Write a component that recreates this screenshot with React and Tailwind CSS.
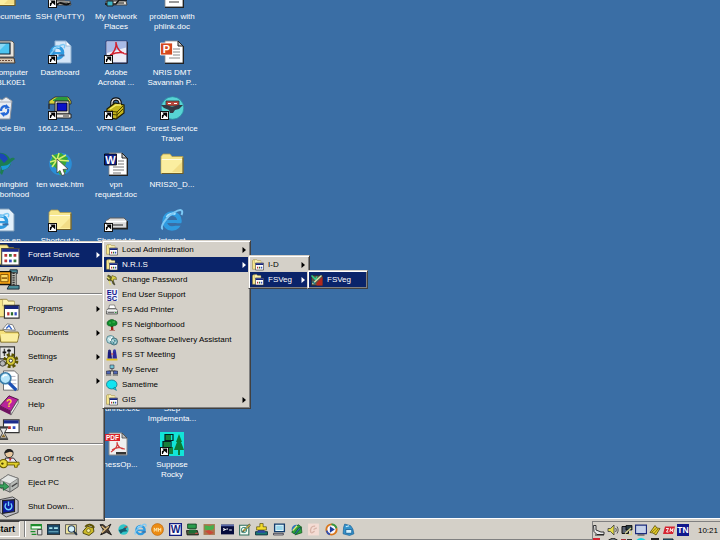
import React from 'react';
import clsx from 'clsx';

/* ---------- Shared icon parts ---------- */

function Icon({ children, className, box = 24 }) {
  return (
    <svg viewBox={`0 0 ${box} ${box}`} className={clsx('shrink-0', className)} aria-hidden="true">
      {children}
    </svg>
  );
}

function ShortcutArrow() {
  return (
    <g>
      <rect x="0.5" y="15.5" width="8" height="8" fill="#fff" stroke="#111" />
      <path d="M2.5 22v-2.5l3-2M3.6 17h3v3z" stroke="#000" strokeWidth="1.2" fill="#000" fillOpacity="0.9" />
    </g>
  );
}

function FolderShape() {
  return (
    <g>
      <path d="M1 4.500l2-2.500h7l2 2.500h11v17H1z" fill="#f6e68c" stroke="#b09a4c" strokeWidth="0.8" />
      <path d="M1.500 7h21v14h-21z" fill="#fbeea0" />
      <path d="M2 7.500h20" stroke="#fffbe0" />
      <path d="M23 5.500v16H2" stroke="#6b5c2a" strokeWidth="1.200" fill="none" />
      <path d="M12 20h10V10z" fill="#eed67a" opacity="0.7" />
    </g>
  );
}

function PageShape() {
  return (
    <g>
      <path d="M5 1h13l5 5v17H5z" fill="#fff" stroke="#8a8a8a" strokeWidth="0.8" />
      <path d="M18 1v5h5z" fill="#c8c8c8" stroke="#222" strokeWidth="1" />
      <path d="M23.400 6v17.400H5" stroke="#222" strokeWidth="1.200" fill="none" />
    </g>
  );
}

function ExplorerShape() {
  return (
    <g fill="none">
      <circle cx="12" cy="13" r="7.500" stroke="#2f9be0" strokeWidth="4.500" />
      <path d="M7 13.500h12" stroke="#2f9be0" strokeWidth="3" />
      <path d="M14 16.500h8" stroke="#3a6ea5" strokeWidth="2.500" />
      <path d="M6.500 9c2-3 6-4 9-3" stroke="#a8e0ff" strokeWidth="2" />
      <path d="M3 21C-1 20 6 9 14 4.500 20 1 24 1 21.500 7" stroke="#7cc8f4" strokeWidth="2" />
    </g>
  );
}

function ProgramFolderShape() {
  return (
    <g>
      <path d="M1 3.500L2.500 1.500h7L11 3.500h6v17H1z" fill="#f6e68c" stroke="#8b7a3a" strokeWidth="1" />
      <path d="M5 1.500h5l1 2h7v5H5z" fill="#fdf3b4" stroke="#9b8a4a" strokeWidth="0.600" />
      <path d="M7 8h16v14H7z" fill="#fff" stroke="#333" strokeWidth="1.200" />
      <path d="M7.500 8.500h15V12h-15z" fill="#16257c" />
      <path d="M10 15.500h2.500V19H10z" fill="#b33" />
      <path d="M14 15.500h2.500V19H14z" fill="#27682b" />
      <path d="M18 15.500h2.500V19H18z" fill="#334cc0" />
    </g>
  );
}

function MonitorShape({ screen = '#35a8e0' }) {
  return (
    <g>
      <path d="M3 2h17l2 2v11H3z" fill="#d8d4cc" stroke="#555" strokeWidth="1" />
      <path d="M5.500 4h12v8.500h-12z" fill={screen} stroke="#222" strokeWidth="0.800" />
      <path d="M7 5l8 0-7 6z" fill="#fff" opacity="0.25" />
      <path d="M7 15h10v2H7z" fill="#777" />
      <path d="M2 17h20l1 4H2z" fill="#e4e0d8" stroke="#444" strokeWidth="1" />
      <path d="M12 19h8" stroke="#333" strokeWidth="1.200" />
    </g>
  );
}

function KeyShape() {
  return (
    <g>
      <circle cx="6" cy="17" r="4.500" fill="#e9d93c" stroke="#6b5d00" strokeWidth="1.200" />
      <circle cx="4.800" cy="17" r="1.300" fill="#4e4400" />
      <path d="M10 15.500h13v3h-2V21h-3v-2.500h-8z" fill="#e0cf2a" stroke="#6b5d00" strokeWidth="1" />
    </g>
  );
}

const icons = {
  folder: <FolderShape />,
  folderLink: <><FolderShape /><ShortcutArrow /></>,
  putty: (
    <>
      <MonitorShape screen="#222" />
      <path d="M9 21c3-6 8 3 13-2" stroke="#111" strokeWidth="2" fill="none" />
      <ShortcutArrow />
    </>
  ),
  network: (
    <>
      <MonitorShape />
      <path d="M1 20h11l3-4h8" stroke="#111" strokeWidth="1.500" fill="none" />
      <path d="M3 17h6v5H3z" fill="#3cb4c8" stroke="#222" strokeWidth="1" />
    </>
  ),
  page: <><PageShape /><path d="M9 18h10" stroke="#999" strokeWidth="2" /></>,
  computer: (
    <>
      <path d="M2 1h18l2 2v14H2z" fill="#e8e4dc" stroke="#555" strokeWidth="1" />
      <path d="M4 3h14v11H4z" fill="#4cc4f0" stroke="#123" strokeWidth="1.200" />
      <path d="M5 4h9l-8 8z" fill="#fff" opacity="0.35" />
      <path d="M3 18h19l1 5H2z" fill="#d8c8b4" stroke="#4a3a2a" />
      <path d="M4 20.500h16" stroke="#6a4a3a" strokeWidth="1.200" strokeDasharray="2 1" />
    </>
  ),
  dashboard: (
    <>
      <path d="M7 1h11l5 5v17H7z" fill="#d4e6f8" stroke="#8fb0d0" strokeWidth="1" />
      <path d="M18 1v5h5z" fill="#fff" stroke="#8fb0d0" strokeWidth="0.800" />
      <g transform="translate(0 3) scale(.75)"><ExplorerShape /></g>
      <ShortcutArrow />
    </>
  ),
  acrobat: (
    <>
      <path d="M2 1h21v22H2z" fill="#ececf6" stroke="#2f3f7a" strokeWidth="1" />
      <path d="M3 1.500h19v6L3 13z" fill="#a9bae6" />
      <path d="M12 2c1 6-2 11-8 16M12 3c1 6 5 11 11 11M6 15c5-2 10-3 14-2" stroke="#d21f2d" strokeWidth="1.500" fill="none" />
      <path d="M2 23.300h21.300V2" stroke="#223" fill="none" />
      <ShortcutArrow />
    </>
  ),
  powerpoint: (
    <>
      <PageShape />
      <path d="M13 9h7M13 12h7M13 15h7M9 18h11" stroke="#888" />
      <path d="M0.500 3h12v12h-12z" fill="#d5481e" stroke="#fff" strokeWidth="0.800" />
      <text x="6.500" y="13" textAnchor="middle" fontSize="11" fontWeight="bold" fill="#fff">P</text>
    </>
  ),
  recycle: (
    <>
      <path d="M4 5l2-3 4 2 4-3 6 4-2 18H7z" fill="#e7ecf2" stroke="#8b929c" strokeWidth="1" />
      <path d="M5 6h14" stroke="#c9ced6" strokeWidth="2" />
      <path d="M9 15c0-4 3-6 6-4M16 13c1 4-2 6-5 5" stroke="#2468d8" strokeWidth="2.200" fill="none" />
      <path d="M14 8l4 4-5 1zM12 21l-4-4 5-1z" fill="#2468d8" />
    </>
  ),
  remote: (
    <>
      <path d="M1 13V5l6-4h13l3 4v3H1z" fill="#d8d43a" stroke="#222" strokeWidth="0.800" />
      <path d="M5 4l5-3h9l2 4H5z" fill="#2b9a3c" />
      <path d="M7 5h14v13H7z" fill="#dcd9d2" stroke="#222" strokeWidth="1" />
      <path d="M9 7h10v8H9z" fill="#0a12c8" stroke="#000" strokeWidth="0.800" />
      <path d="M6 18h17v4H6z" fill="#ece9e2" stroke="#222" strokeWidth="1" />
      <path d="M15 20h6" stroke="#333" />
      <ShortcutArrow />
    </>
  ),
  vpn: (
    <>
      <path d="M8 11V6c1-4 7-4 8 0v5" stroke="#111" strokeWidth="3.500" fill="none" />
      <path d="M8 11V6c1-4 7-4 8 0v5" stroke="#e8e8e8" strokeWidth="1.200" fill="none" />
      <path d="M3 13l8-6 9 2v8l-8 6-9-2z" fill="#c4b51c" stroke="#211e00" strokeWidth="1.200" />
      <path d="M4 15l9 1 6-6M13 16v7M5 18l8 1 6-6M8 14v7" stroke="#4c4500" strokeWidth="1" fill="none" />
      <path d="M6 13l6-4 5 0" stroke="#f6ec6a" strokeWidth="1.500" fill="none" />
      <ShortcutArrow />
    </>
  ),
  travel: (
    <>
      <circle cx="12.500" cy="12" r="11.300" fill="#57d4d4" stroke="#2a8aa0" strokeWidth="0.800" />
      <path d="M6 5h13v5H6z" fill="#b8483c" stroke="#333" strokeWidth="0.800" />
      <path d="M1 9h6l5 2 6-2h5l-4 4-4 1-2 3h-3l-1-3-5-2z" fill="#333a44" />
      <path d="M8 7.500h3M14 7.500h3" stroke="#fff" strokeWidth="1" />
      <ShortcutArrow />
    </>
  ),
  hummingbird: (
    <>
      <path d="M2 2c7-3 14 0 16 5 3-2 4-1 5 0l-4 3c0 5-4 7-7 8l-2 5-2-2 1-5c-3-4-2-9-7-14z" fill="#1c7d53" />
      <path d="M2 2c6-2 12 0 14 5l-4 4C9 7 6 4 2 2z" fill="#1c45b8" />
      <path d="M9 14c4 0 8-1 10-4-1 5-5 8-9 8z" fill="#1b9ad4" />
    </>
  ),
  globe: (
    <>
      <circle cx="12.500" cy="12" r="11.300" fill="#2a8ed6" />
      <path d="M5 3l8-2 7 5-3 8 1 6-6 3-4-7-6-4z" fill="#3aa838" />
      <path d="M9 8L4 3M9 8L11 1M9 8L2 10M9 8L4 15M9 8L18 3M9 8L21 9" stroke="#d8f070" strokeWidth="1.500" fill="none" />
      <path d="M9 7l11 10-5 .5 2 5-3 1-2-5-3 2.500z" fill="#fff" stroke="#444" strokeWidth="0.800" />
    </>
  ),
  word: (
    <>
      <PageShape />
      <path d="M14 9h6M14 12h6M9 15h11M9 18h11M9 21h8" stroke="#777" />
      <path d="M0.500 2h12v11h-12z" fill="#0c1e86" stroke="#000" strokeWidth="0.800" />
      <text x="6.500" y="11.500" textAnchor="middle" fontSize="11" fontWeight="bold" fill="#fff">W</text>
    </>
  ),
  webPage: (
    <>
      <path d="M4 1h13l5 5v17H4z" fill="#e2f0fb" stroke="#7f9cb8" strokeWidth="1" />
      <g transform="translate(0 4) scale(.75)"><ExplorerShape /></g>
    </>
  ),
  drive: (
    <>
      <path d="M2 13l4-3h14l3 3v7H2z" fill="#dcdcdc" stroke="#5c5c5c" strokeWidth="1" />
      <path d="M2 13.500h21" stroke="#fff" strokeWidth="1.500" />
      <path d="M6 17h13" stroke="#777" strokeWidth="1.800" />
      <path d="M3 20.700h20.300V13" stroke="#222" strokeWidth="1.500" fill="none" />
      <ShortcutArrow />
    </>
  ),
  explorer: <ExplorerShape />,
  pdf: (
    <>
      <path d="M5 1h13l5 5v17H5z" fill="#efefef" stroke="#888" strokeWidth="1" />
      <path d="M18 1v5h5z" fill="#bbb" stroke="#444" strokeWidth="0.800" />
      <path d="M0 2h16v7H0z" fill="#d9232b" />
      <text x="8.500" y="8" textAnchor="middle" fontSize="6.500" fontWeight="bold" fill="#fff">PDF</text>
      <path d="M13 10c1 4-1 7-6 10M13 11c1 4 3 6 8 6M8 18c4-3 9-3 12-1" stroke="#d23b3b" strokeWidth="1.200" fill="none" />
      <path d="M12 20h10v2.500H12z" fill="#333" />
    </>
  ),
  suppose: (
    <>
      <path d="M0 0h24v24H0z" fill="#12e4d8" />
      <path d="M19 2l3 8-1 0 3 8h-4v5h-2v-5h-4l3-8-1 0z" fill="#0d7a36" />
      <path d="M5 3h6v5H5zM3 9h7v6H3zM8 15h5v7H8z" fill="#16803a" />
      <path d="M5 2.500h8v6H5zM3 9.500h8v6H3zM11 8v7" stroke="#022" strokeWidth="1.200" fill="none" />
      <ShortcutArrow />
    </>
  ),
  programs: <ProgramFolderShape />,
  forest: (
    <>
      <path d="M0 4l2-3h8l2 3h5v18H0z" fill="#f6e68c" stroke="#8b7a3a" />
      <path d="M4 5h19v18H4z" fill="#fff" stroke="#444" strokeWidth="1.200" />
      <path d="M4.500 5.500h18v3h-18z" fill="#1a2a8c" />
      <path d="M7 11h3v3H7zM7 17h3v3H7zM17 11h3v3h-3z" fill="#b33" />
      <path d="M12 11h3v3h-3zM17 17h3v3h-3z" fill="#357a3a" />
      <path d="M12 17h3v3h-3z" fill="#334cc0" />
    </>
  ),
  winzip: (
    <>
      <path d="M13 2h8v4h-8zM12 19h11v4H10z" fill="#4a8c98" stroke="#123" strokeWidth="1" />
      <path d="M14 5h6v14h-6z" fill="#b8b8b0" stroke="#333" strokeWidth="0.800" />
      <path d="M17 5v14" stroke="#333" strokeWidth="2.500" strokeDasharray="1.500 1" />
      <path d="M1 4h13v14H1z" fill="#ffa812" stroke="#111" strokeWidth="1.400" />
      <path d="M3 7h8v8H3z" fill="#ffd860" stroke="#7c4a00" strokeWidth="1" />
      <path d="M4 11h6" stroke="#7c4a00" strokeWidth="1.500" />
    </>
  ),
  documents: (
    <>
      <path d="M5 8l5-6 6 1 3 6z" fill="#fff" stroke="#777" />
      <path d="M1 9h5l2 2h14l1 3-2 8H3z" fill="#f5e07c" stroke="#7c6a2a" />
      <path d="M3 13h19l-1 8H4z" fill="#fbeea0" />
      <path d="M9 7l3-3 3 4" stroke="#3465c8" strokeWidth="1.500" fill="none" />
    </>
  ),
  settings: (
    <>
      <path d="M2 1h16v13H2z" fill="#e4e4e4" stroke="#333" strokeWidth="1.200" />
      <path d="M7 3v8M12 3v8" stroke="#444" strokeWidth="1.500" />
      <path d="M5 7h4M10 5h4" stroke="#111" strokeWidth="2" />
      <circle cx="14" cy="16" r="6.500" fill="none" stroke="#5a5300" strokeWidth="3.500" strokeDasharray="3 2.100" />
      <circle cx="14" cy="16" r="5" fill="#d6ca3a" stroke="#4b4400" />
      <circle cx="14" cy="16" r="1.800" fill="#fff" stroke="#333" />
      <circle cx="5" cy="19" r="3" fill="#b8b8b8" stroke="#333" />
    </>
  ),
  search: (
    <>
      <path d="M6 1h12l4 4v17H6z" fill="#fff" stroke="#666" />
      <path d="M12 7h7M14 11h6M14 15h6" stroke="#aab" />
      <circle cx="8" cy="9" r="6" fill="#b7e6fb" stroke="#3a7ca8" strokeWidth="1.800" />
      <path d="M12 14l8 8" stroke="#1c50b4" strokeWidth="3.500" />
      <path d="M5 8c1-2 3-3 5-2" stroke="#fff" strokeWidth="1.500" fill="none" />
    </>
  ),
  help: (
    <>
      <path d="M2 13L12 2l10 4-8 13z" fill="#b8249c" stroke="#4b0a40" />
      <path d="M2 13l12 6v4L2 17z" fill="#6f1260" />
      <path d="M14 19l8-13v4l-8 13z" fill="#f2f2f2" stroke="#555" strokeWidth="0.800" />
      <text x="12" y="14" textAnchor="middle" fontSize="11" fontWeight="bold" fill="#ffd83a">?</text>
    </>
  ),
  run: (
    <>
      <path d="M6 2h17v14H6z" fill="#fff" stroke="#333" strokeWidth="1.200" />
      <path d="M6.500 2.500h16V6h-16z" fill="#1a2a8c" />
      <path d="M11 9h3v3h-3z" fill="#b33" />
      <path d="M16 9h3v3h-3z" fill="#334cc0" />
      <path d="M1 10h10M1 23h10" stroke="#444" strokeWidth="2" />
      <path d="M2 11h8l-3 5.500L10 22H2l3-5.500z" fill="#e8e8e8" stroke="#333" />
      <path d="M3.500 21L6 17.500 8.500 21z" fill="#8a6a2a" />
    </>
  ),
  logoff: (
    <>
      <circle cx="12" cy="6" r="4.500" fill="#e9c9a0" stroke="#333" />
      <path d="M7 6c0-6 9-7 10-1l-4-1z" fill="#222" />
      <path d="M8 11h9l4 5H8z" fill="#e8e4f4" stroke="#222" />
      <path d="M12 11l1 4 2-4z" fill="#b83030" />
      <KeyShape />
    </>
  ),
  eject: (
    <>
      <path d="M2 9l9-6 11 4v9l-9 6-11-5z" fill="#b8bcb8" stroke="#555" />
      <path d="M2 9l11 4 9-6-11-4z" fill="#e4e6e4" stroke="#777" strokeWidth="0.800" />
      <path d="M13 13v9" stroke="#666" />
      <path d="M1 14h5v-3l6 5-6 4v-3H1z" fill="#37a05c" stroke="#145c30" strokeWidth="0.800" />
      <path d="M15 16l6-4" stroke="#444" strokeWidth="1.500" />
    </>
  ),
  shutdown: (
    <>
      <path d="M2 4l14-3 6 4v13l-13 5-7-5z" fill="#bcbcc4" stroke="#444" />
      <path d="M5 5l13-1v13L5 19z" fill="#0e1ca0" stroke="#222" strokeWidth="1.200" />
      <path d="M11.500 6v5M9 8c-3 4 0 7 2.500 7s5-3 2.500-7" stroke="#6fd0ff" strokeWidth="1.500" fill="none" />
    </>
  ),
  password: (
    <>
      <path d="M4 2l5 2 5 8 4 10-4-2-3-8-4 3-5-5z" fill="#6a6a24" stroke="#222" />
      <path d="M12 3l8 3 1 5-5-1-3 5-3-4z" fill="#d8ce48" stroke="#3a3600" />
      <path d="M2 6l5 4M6 14l3 8" stroke="#e7e07a" strokeWidth="2.500" />
    </>
  ),
  eusc: (
    <>
      <path d="M0 0h24v24H0z" fill="#eef0fa" />
      <g fill="#10108c" fontSize="15" fontWeight="bold" textAnchor="middle">
        <text x="12" y="11">EU</text>
        <text x="12" y="23">SC</text>
      </g>
    </>
  ),
  printer: (
    <>
      <path d="M7 2h10l3 9H5z" fill="#fff" stroke="#555" strokeWidth="1.200" />
      <path d="M1 12l4-3h14l4 3v8H1z" fill="#c8c8c8" stroke="#444" strokeWidth="1.400" />
      <path d="M1 13h22" stroke="#fff" strokeWidth="1.500" />
      <path d="M4 17h12" stroke="#666" strokeWidth="1.800" />
      <path d="M18 16h3v2h-3z" fill="#2a9a3a" />
    </>
  ),
  tree: (
    <>
      <path d="M10 13h4l1 9h3v1H7v-1h3z" fill="#a02018" />
      <path d="M2 8c0-4 4-4 5-6 4-2 8-1 10 1 4 0 6 4 5 7-1 3-4 4-6 3-2 3-6 3-8 1-4 0-6-2-6-6z" fill="#0f8c2c" stroke="#064214" />
      <path d="M6 8h4M13 6h5" stroke="#5fd46a" strokeWidth="1.500" />
    </>
  ),
  delivery: (
    <>
      <circle cx="9" cy="11" r="8" fill="#b8dce0" stroke="#2f6a78" strokeWidth="1.400" />
      <circle cx="16" cy="15" r="7" fill="#88bcc4" stroke="#27525c" strokeWidth="1.400" />
      <path d="M5 8l5 6M12 5l-4 8M13 13l6 4" stroke="#fff" strokeWidth="2" />
      <path d="M14 20l4-8" stroke="#1e6470" strokeWidth="1.500" />
    </>
  ),
  meeting: (
    <>
      <path d="M1 19h22v4H1z" fill="#e0c022" />
      <path d="M4 5h6l2 14H3z" fill="#1b1c7c" />
      <path d="M14 4h6l2 15h-9z" fill="#28289c" />
      <circle cx="7" cy="4" r="3" fill="#26267a" />
      <circle cx="17" cy="3.500" r="3" fill="#3636a8" />
      <path d="M10 10h5" stroke="#c83a3a" strokeWidth="2" />
    </>
  ),
  server: (
    <>
      <path d="M12 8v6M5 14h14" stroke="#222" strokeWidth="1.500" />
      <path d="M8 2h8v7H8z" fill="#72c4d4" stroke="#334" strokeWidth="1.200" />
      <path d="M1 14h8v6H1zM15 14h8v6h-8z" fill="#5068b8" stroke="#223" strokeWidth="1.200" />
      <path d="M0 21h10v2H0zM14 21h10v2H14z" fill="#bbb" stroke="#444" strokeWidth="0.800" />
    </>
  ),
  sametime: (
    <>
      <ellipse cx="11.500" cy="11" rx="10.500" ry="9" fill="#10e4f0" stroke="#0c6c80" strokeWidth="1.500" />
      <path d="M14 19l7 4-3-7z" fill="#10c4d4" stroke="#0c6c80" />
    </>
  ),
  fsveg: (
    <>
      <path d="M1 3h22v20H1z" fill="#5a5648" stroke="#222" />
      <path d="M11 18l12-13v18H11z" fill="#b4281c" />
      <path d="M1 3l8 8 3-6" stroke="#2ed08c" strokeWidth="3" fill="none" />
      <path d="M3 20l18-17" stroke="#d8e8b0" strokeWidth="2.500" />
      <path d="M3 15l5 5" stroke="#1c7c8c" strokeWidth="3" />
    </>
  ),
  qlSwitch: (
    <>
      <path d="M2 3h19v8H2z" fill="#f4fff4" stroke="#1d8c2c" strokeWidth="2" />
      <path d="M2 3h19v3H2z" fill="#1d8c2c" />
      <path d="M1 16h9M3 21h9" stroke="#1d8c2c" strokeWidth="2.500" />
      <path d="M14 12h8v10h-8z" fill="#e0e0e0" stroke="#333" strokeWidth="1.500" />
    </>
  ),
  qlTerm: (
    <>
      <path d="M0 3h24v18H0z" fill="#1c4c6c" stroke="#111" strokeWidth="1.500" />
      <path d="M4 8h6v3H4zM13 8h7v3h-7z" fill="#a8e4ec" />
      <path d="M3 16h18" stroke="#5898b0" strokeWidth="2.500" />
    </>
  ),
  qlFind: (
    <>
      <path d="M1 3h20v17H1z" fill="#f0e8a0" stroke="#444" strokeWidth="1.500" />
      <circle cx="12" cy="11" r="6" fill="#d4f4fc" stroke="#346" strokeWidth="2" />
      <path d="M16 15l6 7" stroke="#234" strokeWidth="3.500" />
    </>
  ),
  qlPhone: (
    <>
      <path d="M2 15l8-9 11 3 1 7-9 7-11-4z" fill="#cbb92a" stroke="#3a3400" strokeWidth="1.500" />
      <path d="M6 7c4-6 14-5 16 2" stroke="#5a5000" strokeWidth="3.500" fill="none" />
      <circle cx="12" cy="14" r="3.500" fill="#f8f0a0" stroke="#3a3400" />
    </>
  ),
  qlTools: (
    <>
      <path d="M2 3h6l5 5 9-6-5 10 6 10-9-5-11 5 5-9z" fill="#4a3c30" stroke="#111" strokeWidth="1.500" />
      <path d="M5 18l13-12M5 6l6 5" stroke="#d8b87c" strokeWidth="2.500" />
    </>
  ),
  qlTeal: (
    <>
      <circle cx="12" cy="12" r="9.500" fill="#30c4c8" />
      <path d="M3 13l7-2 9-6-3 7 4 3-9 1-4 4z" fill="#155c70" />
      <path d="M14 8l5-1" stroke="#e04838" strokeWidth="2.500" />
    </>
  ),
  qlOrange: (
    <>
      <circle cx="12" cy="12" r="11" fill="#ec8c14" stroke="#b05c04" />
      <path d="M6 16V9l3 5 2-5v7M14 9v7M18 9v7M14 12h4" stroke="#ffe4a8" strokeWidth="1.800" fill="none" />
    </>
  ),
  qlWord: (
    <>
      <path d="M1 1h22v22H1z" fill="#fff" stroke="#101c80" strokeWidth="3" />
      <text x="12" y="19" textAnchor="middle" fontSize="19" fontWeight="bold" fill="#101c80">W</text>
    </>
  ),
  qlTrain: (
    <>
      <path d="M3 2h16v8H3z" fill="#2a9c4c" stroke="#063c18" strokeWidth="1.500" />
      <path d="M1 14h20l2 8H2z" fill="#4c5c3c" stroke="#111" strokeWidth="1.500" />
      <path d="M6 12l12 0 3 6-16 1z" fill="#1c6c34" />
      <path d="M17 19h5" stroke="#e04848" strokeWidth="2" />
    </>
  ),
  qlMap: (
    <>
      <path d="M1 2h21v20H1z" fill="#a8744c" />
      <path d="M3 4l9 2 8-3v8l-8 3-9-2z" fill="#46b04c" />
      <path d="M4 15l7-2 9 5-8 3z" fill="#cc4838" />
    </>
  ),
  qlConsole: (
    <>
      <path d="M0 3h24v18H0z" fill="#060c3c" />
      <path d="M0 3h24v3H0z" fill="#5c6cac" />
      <path d="M4 10l4 2-4 2M10 11h3M15 13h5" stroke="#fff" strokeWidth="2" fill="none" />
    </>
  ),
  qlNote: (
    <>
      <path d="M3 4h17v18H3z" fill="#f4fcf4" stroke="#2c6c5c" strokeWidth="2" />
      <path d="M7 17l3-4 11-11 2 2-11 11z" fill="#e8d048" stroke="#222" strokeWidth="1.200" />
      <circle cx="11" cy="13" r="5" fill="none" stroke="#3a8c7c" strokeWidth="1.800" />
    </>
  ),
  qlUser: (
    <>
      <path d="M1 16h22v6H1z" fill="#1c7c74" stroke="#023" strokeWidth="1.500" />
      <path d="M6 12h11l2 6H4z" fill="#2c48a8" />
      <path d="M9 1h6v6h6v6H3V7h6z" fill="#f4dc2c" stroke="#4c4400" strokeWidth="1.200" />
    </>
  ),
  qlDesktop: (
    <>
      <path d="M3 2h18v14H3z" fill="#e4f8fc" stroke="#123c6c" strokeWidth="2.500" />
      <path d="M6 5h12v8H6z" fill="#9cd8ec" />
      <path d="M1 19h18v3H1z" fill="#f4f4f4" stroke="#223" strokeWidth="1.500" />
    </>
  ),
  qlSync: (
    <>
      <circle cx="12" cy="12" r="9" fill="#3478b8" />
      <path d="M3 17L15 3l7 5-6 1L8 20zM9 22l12-13 1 9z" fill="#2ca43c" stroke="#0c4c14" strokeWidth="1.200" />
      <path d="M5 14l8-9" stroke="#e8f070" strokeWidth="2.500" />
    </>
  ),
  qlPale: (
    <>
      <path d="M2 1h20v22H2z" fill="#f4dcd4" />
      <path d="M7 18c-2-8 2-13 8-12M12 12l6-3M8 19l6-4" stroke="#d8b4a8" strokeWidth="2.500" fill="none" />
    </>
  ),
  qlMedia: (
    <>
      <circle cx="12" cy="12" r="9.500" fill="#f8f8ff" stroke="#d8761c" strokeWidth="3.500" />
      <path d="M12 2.500a9.500 9.500 0 019 7" stroke="#2c9c48" strokeWidth="3.500" fill="none" />
      <path d="M3 14a9.500 9.500 0 006 7" stroke="#2c50b8" strokeWidth="3.500" fill="none" />
      <path d="M9 6l9 6-9 6z" fill="#1c3c9c" />
    </>
  ),
  qlOutlook: (
    <>
      <path d="M5 2l11 3 4 6 2 9-8 3-12-3 1-12z" fill="#3494cc" stroke="#145c94" strokeWidth="1.200" />
      <path d="M7 12h11v7H7z" fill="#d4f0fc" stroke="#145c94" strokeWidth="1.500" />
      <path d="M7 7l6-2" stroke="#c8ecfc" strokeWidth="2" />
    </>
  ),
  trayPhone: (
    <>
      <path d="M1 3h5v9l10 4h6v5H8l-6-6z" fill="#e8e8e8" stroke="#222" strokeWidth="1.800" />
      <path d="M4 22h18" stroke="#222" strokeWidth="2" />
    </>
  ),
  traySound: (
    <>
      <path d="M2 9h5l7-7v20l-7-7H2z" fill="#e4dc48" stroke="#333" strokeWidth="1.500" />
      <path d="M17 8c2 3 2 5 0 8M20 5c3 5 3 9 0 14" stroke="#444" strokeWidth="1.800" fill="none" />
    </>
  ),
  trayBoxes: (
    <>
      <path d="M2 5h13v14H2z" fill="#5c6474" stroke="#111" strokeWidth="2" />
      <path d="M10 3h12v9H10z" fill="#2c3c44" stroke="#000" strokeWidth="1.500" />
      <path d="M8 19l12-11M13 21h8v-7" stroke="#d8d48c" strokeWidth="2.500" fill="none" />
    </>
  ),
  trayScreen: (
    <>
      <path d="M1 2h22v17H1z" fill="#c4d0e8" stroke="#1c2c7c" strokeWidth="2.500" />
      <path d="M5 22h14" stroke="#333" strokeWidth="2" />
    </>
  ),
  trayPlug: (
    <>
      <path d="M2 17L12 3l4 5 6 1-8 13-6-4z" fill="#e4cc2c" stroke="#4c4000" strokeWidth="1.500" />
      <path d="M6 16l9-8M10 19l8-9" stroke="#6c5c00" strokeWidth="1.500" />
    </>
  ),
  trayRed: (
    <>
      <path d="M4 5h20l-4 15H0z" fill="#d42430" />
      <path d="M6 9h5l-4 7h4M14 16l1-7 2 5 3-5-1 7" stroke="#fff" strokeWidth="1.800" fill="none" />
    </>
  ),
  trayTN: (
    <>
      <path d="M0 0h24v24H0z" fill="#10188c" />
      <text x="12" y="18" textAnchor="middle" fontSize="17" fontWeight="bold" fill="#fff">TN</text>
    </>
  ),
  miniRed: <path d="M0 0h14v24H0z" fill="#d42430" />,
  miniGray: <path d="M3 4l9-4 9 4v20H3z" fill="#6c747c" stroke="#222" strokeWidth="2" />,
  miniMix: <><path d="M0 2h10v22H0z" fill="#a83038" /><path d="M12 2h10v22H12z" fill="#333" /></>,
  miniTeal: <path d="M0 12a12 12 0 0124 0v12H0z" fill="#10d4e0" />,
  miniDark: <path d="M4 0h16v24H4z" fill="#222" />,
  miniBlue: <path d="M0 2h20v22H0z" fill="#2c6c84" stroke="#123" strokeWidth="2" />,
};

/* ---------- Page data ---------- */

const desktopRows = [
  [['folder', 'My Documents'], ['putty', 'SSH (PuTTY)'], ['network', 'My Network', 'Places'], ['page', 'problem with', 'phlink.doc']],
  [['computer', 'My Computer', 'IBMBLK0E1'], ['dashboard', 'Dashboard'], ['acrobat', 'Adobe', 'Acrobat ...'], ['powerpoint', 'NRIS DMT', 'Savannah P...']],
  [['recycle', 'Recycle Bin'], ['remote', '166.2.154....'], ['vpn', 'VPN Client'], ['travel', 'Forest Service', 'Travel']],
  [['hummingbird', 'Hummingbird', 'Neighborhood'], ['globe', 'ten week.htm'], ['word', 'vpn', 'request.doc'], ['folder', 'NRIS20_D...']],
  [['webPage', 'Logon.en'], ['folderLink', 'Shortcut to'], ['drive', 'Shortcut to'], ['explorer', 'Internet']],
  [null, null, null, null],
  [null, null, null, null],
  [null, null, [null, 'gisrunner.exe'], [null, 'Step', 'Implementa...']],
  [null, null, ['pdf', 'FitnessOp...'], ['suppose', 'Suppose', 'Rocky']],
];

const forestServiceMenu = [
  { icon: 'programs', label: 'Local Administration', arrow: true },
  {
    icon: 'programs',
    label: 'N.R.I.S',
    arrow: true,
    active: true,
    width: 'w-[62px]',
    items: [
      { icon: 'programs', label: 'I-D', arrow: true },
      {
        icon: 'programs',
        label: 'FSVeg',
        arrow: true,
        active: true,
        width: 'w-[61px]',
        items: [{ icon: 'fsveg', label: 'FSVeg', active: true }],
      },
    ],
  },
  { icon: 'password', label: 'Change Password' },
  { icon: 'eusc', label: 'End User Support' },
  { icon: 'printer', label: 'FS Add Printer' },
  { icon: 'tree', label: 'FS Neighborhood' },
  { icon: 'delivery', label: 'FS Software Delivery Assistant' },
  { icon: 'meeting', label: 'FS ST Meeting' },
  { icon: 'server', label: 'My Server' },
  { icon: 'sametime', label: 'Sametime' },
  { icon: 'programs', label: 'GIS', arrow: true },
];

const startMenu = [
  [
    { icon: 'forest', label: 'Forest Service', arrow: true, active: true, width: 'w-[149px]', items: forestServiceMenu },
    { icon: 'winzip', label: 'WinZip' },
  ],
  [
    { icon: 'programs', label: 'Programs', arrow: true },
    { icon: 'documents', label: 'Documents', arrow: true },
    { icon: 'settings', label: 'Settings', arrow: true },
    { icon: 'search', label: 'Search', arrow: true },
    { icon: 'help', label: 'Help' },
    { icon: 'run', label: 'Run' },
  ],
  [
    { icon: 'logoff', label: 'Log Off rteck' },
    { icon: 'eject', label: 'Eject PC' },
    { icon: 'shutdown', label: 'Shut Down...' },
  ],
];

const quickLaunch = [
  'qlSwitch', 'qlTerm', 'qlFind', 'qlPhone', 'qlTools', 'qlTeal', 'explorer', 'qlOrange', 'qlWord', 'qlTrain',
  'qlMap', 'qlConsole', 'qlNote', 'qlUser', 'qlDesktop', 'qlSync', 'qlPale', 'qlMedia', 'qlOutlook',
];

const trayTop = ['trayPhone', 'traySound', 'trayBoxes', 'trayScreen', 'trayPlug', 'trayRed', 'trayTN'];
const trayBottom = ['miniRed', 'miniGray', 'miniMix', 'miniTeal', 'miniDark', 'miniBlue'];

const raised =
  'border border-t-[#d4d0c8] border-l-[#d4d0c8] border-r-[#404040] border-b-[#404040] p-px shadow-[inset_1px_1px_0_#fff,inset_-1px_-1px_0_#808080] bg-[#d4d0c8]';

/* ---------- Components ---------- */

function DesktopIcon({ entry }) {
  if (!entry) return <div />;
  const [icon, ...lines] = entry;
  return (
    <button type="button" className="flex flex-col items-center justify-start gap-1 text-white">
      <Icon className="size-6">{icon && icons[icon]}</Icon>
      <span className="leading-[10px] text-center whitespace-nowrap">
        {lines.map((line) => (
          <span key={line} className="block">{line}</span>
        ))}
      </span>
    </button>
  );
}

function MenuItem({ item, large }) {
  return (
    <li className="relative">
      <button
        type="button"
        aria-haspopup={item.arrow ? 'menu' : undefined}
        className={clsx(
          'flex w-full items-center whitespace-nowrap text-left',
          large ? 'h-6 gap-2 pr-0.5' : 'h-[15px] gap-1 pl-0.5 pr-0.5',
          item.active ? 'bg-[#0a246a] text-white' : 'text-black'
        )}
      >
        <Icon className={large ? 'size-[22px]' : 'size-3'}>{icons[item.icon]}</Icon>
        <span className="flex-1">{item.label}</span>
        {item.arrow && (
          <Icon box={6} className="size-[6px]">
            <path d="M1.500 0L5 3 1.500 6z" fill="currentColor" />
          </Icon>
        )}
      </button>
      {item.items && (
        <ul className={clsx('absolute left-full z-10 -ml-px', large ? '-top-[3px]' : '-top-0.5', raised, item.width)}>
          {item.items.map((child) => (
            <MenuItem key={child.label} item={child} />
          ))}
        </ul>
      )}
    </li>
  );
}

function StartMenu() {
  return (
    <nav aria-label="Start menu" className={clsx('absolute bottom-[19px] -left-1 z-10 w-[109px]', raised)}>
      {startMenu.map((group, i) => (
        <div key={i}>
          {i > 0 && (
            <div className="flex h-[6px] items-center">
              <hr className="w-full border-t border-b border-t-[#808080] border-b-white" />
            </div>
          )}
          <ul>
            {group.map((item) => (
              <MenuItem key={item.label} item={item} large />
            ))}
          </ul>
        </div>
      ))}
    </nav>
  );
}

function TrayRow({ names }) {
  return (
    <div className="flex gap-0.5">
      {names.map((name) => (
        <button key={name} type="button" aria-label={name}>
          <Icon className="size-3">{icons[name]}</Icon>
        </button>
      ))}
    </div>
  );
}

function Taskbar() {
  return (
    <footer className="flex h-[22px] shrink-0 items-stretch overflow-hidden border-t border-t-white bg-[#d4d0c8]">
      <div className="flex flex-1 items-center border-b border-b-[#808080]">
        <button
          type="button"
          className="flex h-4 w-5 items-center justify-end overflow-hidden border-y border-r border-t-[#404040] border-r-white border-b-white pr-1 text-[9px] font-bold"
        >
          Start
        </button>
        <div className="mx-1 h-4 w-0.5 border-l border-l-[#808080] bg-white" />
        <div className="flex w-[325px] justify-between">
          {quickLaunch.map((name) => (
            <button key={name} type="button" aria-label={name}>
              <Icon className="size-[13px]">{icons[name]}</Icon>
            </button>
          ))}
        </div>
      </div>
      <div className="mt-0.5 flex w-32 items-start justify-between border-l border-t border-[#808080] pt-0.5 pr-0.5">
        <div className="flex flex-col gap-0.5">
          <TrayRow names={trayTop} />
          <TrayRow names={trayBottom} />
        </div>
        <time className="leading-[14px]">10:21</time>
      </div>
    </footer>
  );
}

export default function App() {
  return (
    <div className="relative flex h-screen flex-col overflow-hidden bg-[#3a6ea5] font-['Liberation_Sans',Arial,sans-serif] text-[8px] leading-[10px] text-black">
      <main className="min-h-0 flex-1 overflow-hidden">
        <div className="-ml-6 -mt-4 grid auto-rows-[56px] grid-cols-[repeat(4,56px)]">
          {desktopRows.flat().map((entry, i) => (
            <DesktopIcon key={i} entry={entry} />
          ))}
        </div>
      </main>
      <Taskbar />
      <StartMenu />
    </div>
  );
}
